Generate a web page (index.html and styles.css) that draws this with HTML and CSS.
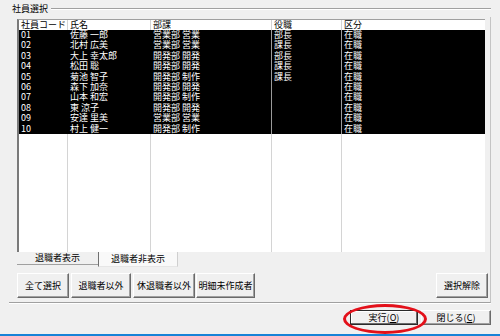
FILE: index.html
```html
<!DOCTYPE html>
<html lang="ja">
<head>
    <meta charset="UTF-8">
    <title>社員選択</title>
    <link rel="stylesheet" href="styles.css">
</head>
<body>
    <div class="window">
        <div class="group">
            <div class="group-head">
                <span class="group-title">社員選択</span>
                <span class="rule"></span>
            </div>
            <div class="group-body">
                <div class="list">
                    <table class="grid">
                        <thead>
                            <tr><th class="c1">社員コード</th><th class="c2">氏名</th><th class="c3">部課</th><th class="c4">役職</th><th>区分</th></tr>
                        </thead>
                        <tbody>
                            <tr class="sel"><td>01</td><td>佐藤 一郎</td><td>営業部 営業</td><td>部長</td><td>在職</td></tr>
                            <tr class="sel"><td>02</td><td>北村 広美</td><td>営業部 営業</td><td>課長</td><td>在職</td></tr>
                            <tr class="sel"><td>03</td><td>大上 幸太郎</td><td>開発部 開発</td><td>部長</td><td>在職</td></tr>
                            <tr class="sel"><td>04</td><td>松田 聡</td><td>開発部 開発</td><td>課長</td><td>在職</td></tr>
                            <tr class="sel"><td>05</td><td>菊池 智子</td><td>開発部 制作</td><td>課長</td><td>在職</td></tr>
                            <tr class="sel"><td>06</td><td>森下 加奈</td><td>開発部 開発</td><td></td><td>在職</td></tr>
                            <tr class="sel"><td>07</td><td>山本 和宏</td><td>開発部 制作</td><td></td><td>在職</td></tr>
                            <tr class="sel"><td>08</td><td>東 涼子</td><td>開発部 開発</td><td></td><td>在職</td></tr>
                            <tr class="sel"><td>09</td><td>安達 里美</td><td>営業部 営業</td><td></td><td>在職</td></tr>
                            <tr class="sel"><td>10</td><td>村上 健一</td><td>開発部 制作</td><td></td><td>在職</td></tr>
                            <tr class="filler"><td></td><td></td><td></td><td></td><td></td></tr>
                        </tbody>
                    </table>
                </div>
                <div class="tabs">
                    <div class="tab">退職者表示</div>
                    <div class="tab active">退職者非表示</div>
                </div>
                <div class="actions">
                    <button class="btn w-all">全て選択</button>
                    <button class="btn w-ex">退職者以外</button>
                    <button class="btn w-ex2">休退職者以外</button>
                    <button class="btn w-meisai">明細未作成者</button>
                    <button class="btn w-clear">選択解除</button>
                </div>
            </div>
        </div>
        <div class="footer">
            <button class="btn default">実行(<u>O</u>)</button>
            <button class="btn close">閉じる(<u>C</u>)</button>
            <span class="mark"></span>
        </div>
    </div>
</body>
</html>
```

FILE: styles.css
```css
body {
    margin: 0;
    background-color: #f0f0f0;
    font-family: "Noto Sans CJK JP", sans-serif;
    font-size: 9px;
    color: #000;
}
.window {
    height: 336px;
    box-sizing: border-box;
    border-bottom: 2px solid #1883d7;
    overflow: hidden;
}
.group {
    margin: 0 9px 0 9px;
}
.group-head {
    display: flex;
    align-items: center;
    height: 17px;
}
.group-title {
    padding: 0 3px;
    line-height: 11px;
}
.rule {
    flex: 1;
    height: 0;
    border-top: 1px solid #a0a0a0;
    box-shadow: 0 1px #fff;
}
.group-body {
    padding: 2px 5px 4px 8px;
    border-right: 1px solid #c4c4c4;
    border-bottom: 1px solid #a0a0a0;
    box-shadow: 0 1px #fff;
}
.list {
    height: 233px;
    box-sizing: border-box;
    background-color: #fff;
    border-top: 1px solid #a0a0a0;
    border-left: 2px solid #7a7a7a;
}
.grid {
    width: 100%;
    table-layout: fixed;
    border-collapse: separate;
    border-spacing: 0;
}
.grid th,
.grid td {
    box-sizing: border-box;
    padding: 0 0 0 2px;
    border-right: 1px solid #d4d4d4;
    text-align: left;
    font-weight: normal;
    white-space: nowrap;
}
.grid th {
    height: 10px;
    line-height: 10px;
}
.grid th:last-child,
.grid td:last-child {
    border-right: none;
}
.c1 { width: 49px; }
.c2 { width: 83px; }
.c3 { width: 121px; }
.c4 { width: 70px; }
.grid td {
    height: 10.4px;
    line-height: 10.4px;
}
.sel td {
    background-color: #000;
    color: #fff;
}
.sel td:nth-child(-n+2) {
    border-right-color: #000;
}
.sel td:nth-child(3),
.sel td:nth-child(4) {
    border-right-color: #9a9a9a;
}
.filler td {
    height: 118px;
}
.tabs {
    display: flex;
    height: 15px;
}
.tab {
    width: 81px;
    height: 13px;
    box-sizing: border-box;
    line-height: 12px;
    text-align: center;
    border-bottom: 1px solid #a0a0a0;
}
.tab.active {
    width: 80px;
    height: 15px;
    line-height: 14px;
    background-color: #f9f9f9;
    border-left: 1px solid #707070;
    border-right: 1px solid #cfcfcf;
    border-bottom: 1px solid #e6e6e6;
}
.actions {
    display: flex;
    margin-top: 6px;
}
.btn {
    height: 25px;
    padding: 0;
    font-family: inherit;
    font-size: 9px;
    color: #000;
    background-color: #f0f0f0;
    border: 1px solid;
    border-color: #fff #6a6a6a #6a6a6a #fff;
    box-shadow: inset -1px -1px #a0a0a0;
}
.w-all { width: 52px; margin-right: 2px; }
.w-ex { width: 60px; margin-right: 2px; }
.w-ex2 { width: 62px; margin-right: 1px; }
.w-meisai { width: 59px; }
.w-clear {
    width: 52px;
    margin-left: auto;
    margin-right: -3px;
}
.footer {
    position: relative;
    display: flex;
    justify-content: flex-end;
    padding: 7px 9px 0 0;
}
.footer .btn {
    height: 15px;
}
.default {
    width: 68px;
    margin-right: 3px;
    border-color: #2a2a2a;
    box-shadow: inset -1px -1px #6a6a6a, inset 1px 1px #fff;
}
.close {
    width: 70px;
}
.mark {
    position: absolute;
    left: 343px;
    top: 1px;
    width: 84px;
    height: 30px;
    box-sizing: border-box;
    border: 3px solid #e3101a;
    border-radius: 50%;
}
```
